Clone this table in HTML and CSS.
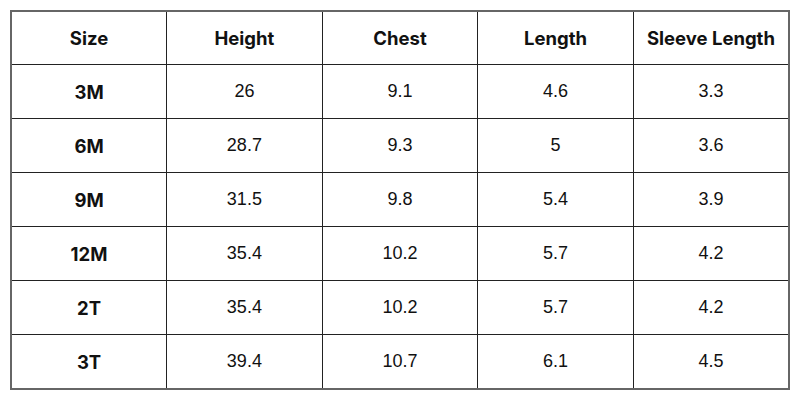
FILE: index.html
```html
<!DOCTYPE html>
<html>
<head>
<meta charset="utf-8">
<link rel="stylesheet" href="styles.css">
</head>
<body>
<table class="size-table">
  <thead>
    <tr><th>Size</th><th>Height</th><th>Chest</th><th>Length</th><th>Sleeve Length</th></tr>
  </thead>
  <tbody>
    <tr><th>3M</th><td>26</td><td>9.1</td><td>4.6</td><td>3.3</td></tr>
    <tr><th>6M</th><td>28.7</td><td>9.3</td><td>5</td><td>3.6</td></tr>
    <tr><th>9M</th><td>31.5</td><td>9.8</td><td>5.4</td><td>3.9</td></tr>
    <tr><th>12M</th><td>35.4</td><td>10.2</td><td>5.7</td><td>4.2</td></tr>
    <tr><th>2T</th><td>35.4</td><td>10.2</td><td>5.7</td><td>4.2</td></tr>
    <tr><th>3T</th><td>39.4</td><td>10.7</td><td>6.1</td><td>4.5</td></tr>
  </tbody>
</table>
</body>
</html>
```

FILE: styles.css
```css
html, body {
  margin: 0;
  background: #ffffff;
}
body {
  padding: 10px;
}
.size-table {
  width: 780px;
  border-collapse: collapse;
  table-layout: fixed;
  border: 2px solid #666;
  color: #111;
}
.size-table th,
.size-table td {
  height: 53px;
  padding: 0;
  text-align: center;
  vertical-align: middle;
  border: 1px solid #222;
}
.size-table thead th {
  height: 52px;
}
.size-table th {
  font-family: "Inter", "Open Sans", sans-serif;
  font-weight: 700;
  font-size: 18.5px;
}
.size-table td {
  font-family: "Liberation Sans", Arial, sans-serif;
  font-size: 18px;
  font-weight: 400;
}
```
